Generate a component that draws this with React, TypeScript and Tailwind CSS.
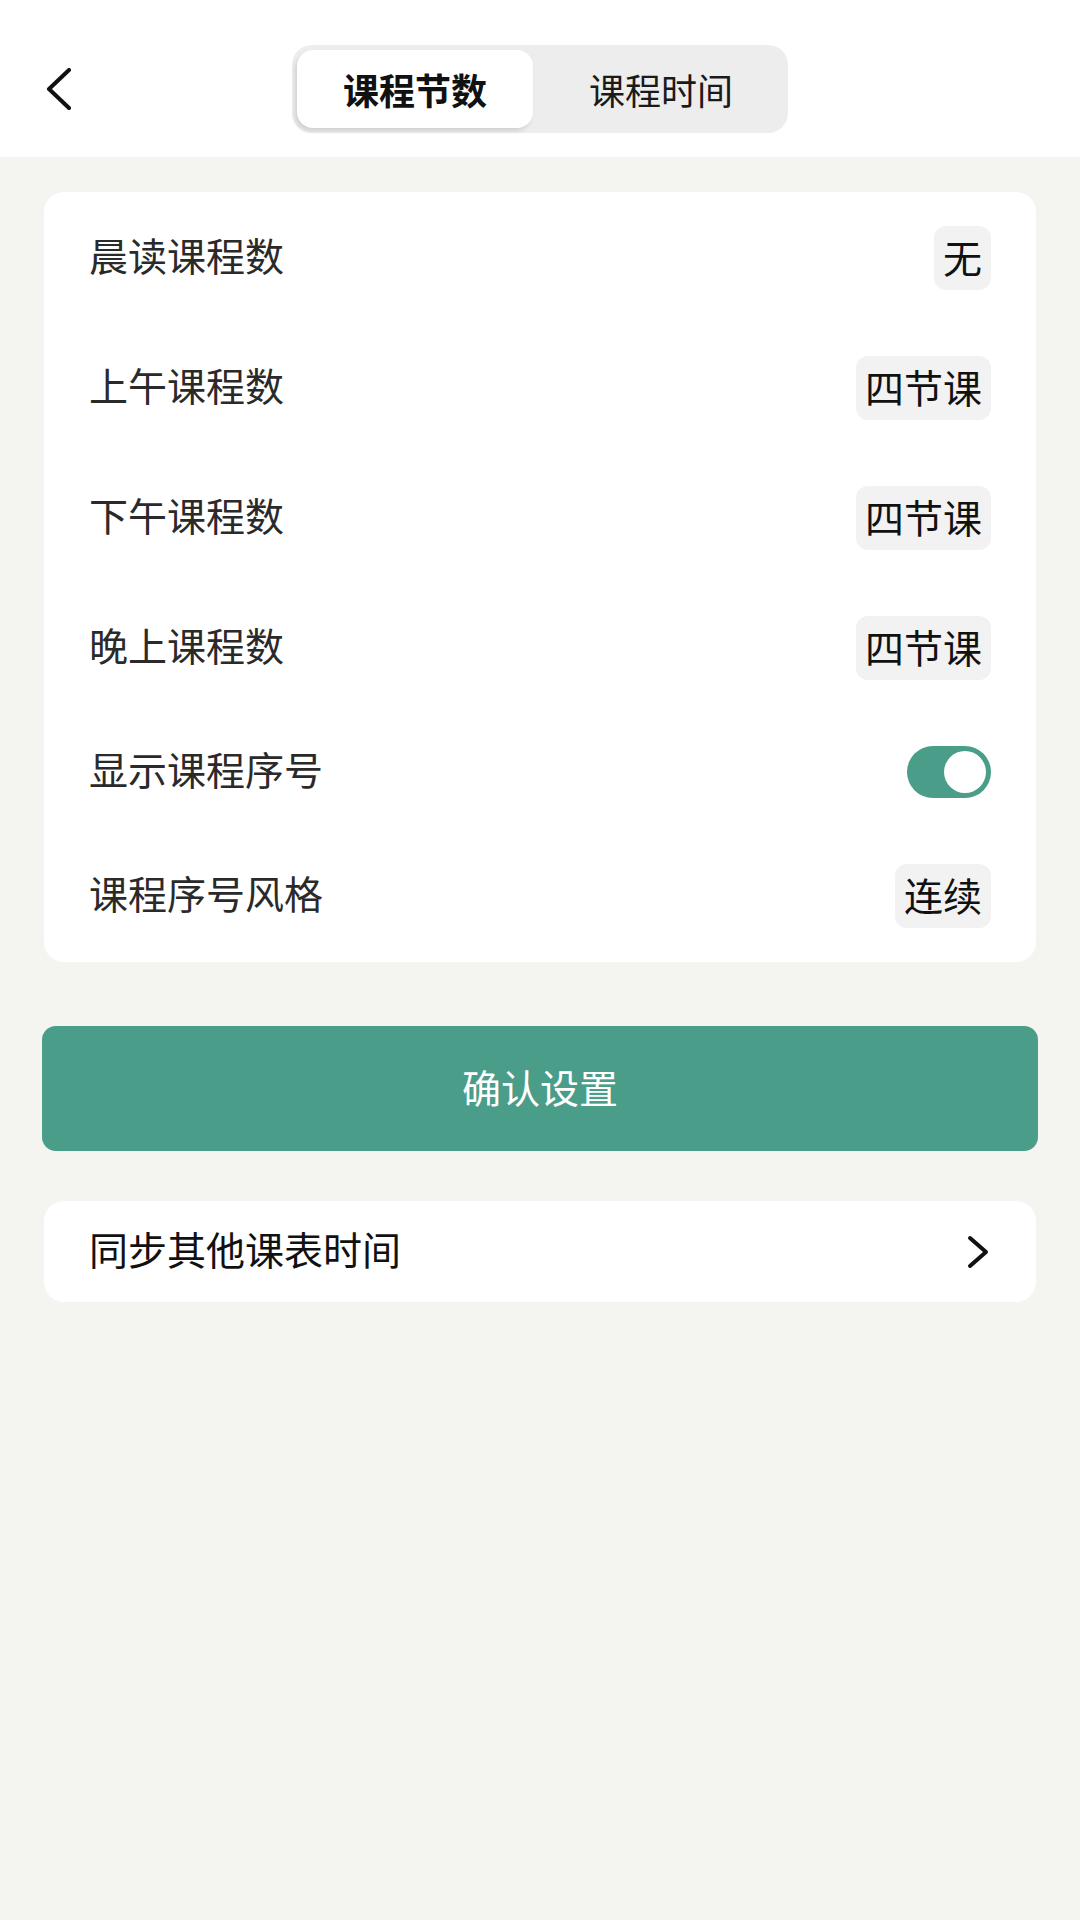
import React, { useState } from 'react';

const FONT = { fontFamily: '"Noto Sans CJK SC", "Noto Sans", sans-serif' };

interface Row {
  label: string;
  value?: string;
  toggle?: boolean;
}

const rows: Row[] = [
  { label: '晨读课程数', value: '无' },
  { label: '上午课程数', value: '四节课' },
  { label: '下午课程数', value: '四节课' },
  { label: '晚上课程数', value: '四节课' },
  { label: '显示课程序号', toggle: true },
  { label: '课程序号风格', value: '连续' },
];

function BackIcon() {
  return (
    <svg width="26" height="42" viewBox="0 0 26 42" fill="none">
      <polyline points="23,2 3,21 23,40" stroke="#111" strokeWidth="4" strokeLinecap="round" strokeLinejoin="round" />
    </svg>
  );
}

function ChevronRight() {
  return (
    <svg width="22" height="34" viewBox="0 0 22 34" fill="none">
      <polyline points="3,3 19,17 3,31" stroke="#111" strokeWidth="4" strokeLinecap="round" strokeLinejoin="round" />
    </svg>
  );
}

export default function App() {
  const [tab, setTab] = useState(0);
  const [showNo, setShowNo] = useState(true);

  return (
    <div className="min-h-[1920px] w-full bg-[#f4f4f0]" style={FONT}>
      {/* top bar */}
      <div className="h-[157px] bg-white grid grid-cols-[1fr_auto_1fr] items-start pt-[45px]">
        <div className="h-[88px] flex items-center pl-[46px]">
          <BackIcon />
        </div>
        <div className="w-[496px] h-[88px] rounded-[20px] bg-[#ededed] p-[5px] flex">
          {['课程节数', '课程时间'].map((t, i) => (
            <button
              key={t}
              type="button"
              onClick={() => setTab(i)}
              className={
                i === tab
                  ? 'w-[236px] h-full rounded-[16px] bg-white shadow-[-2px_3px_4px_rgba(0,0,0,0.12)] text-[36px] font-bold text-[#111] flex items-center justify-center'
                  : 'flex-1 h-full pl-[6px] rounded-[16px] text-[36px] text-[#1a1a1a] flex items-center justify-center'
              }
            >
              {t}
            </button>
          ))}
        </div>
        <div />
      </div>

      <div className="px-[44px] pt-[35px]">
        {/* settings card */}
        <div className="bg-white rounded-[20px] px-[45px] py-[1px]">
          {rows.map(r => (
            <div
              key={r.label}
              className={'flex items-center justify-between ' + (r.toggle ? 'h-[118px]' : 'h-[130px]')}
            >
              <span className="text-[39px] text-[#2a2a2a] leading-none pb-[7px]">{r.label}</span>
              {r.toggle ? (
                <button
                  type="button"
                  onClick={() => setShowNo(!showNo)}
                  className={
                    'w-[84px] h-[52px] rounded-full p-[5px] flex items-center ' +
                    (showNo ? 'bg-[#4a9d88] justify-end' : 'bg-[#e2e2e2] justify-start')
                  }
                >
                  <span className="w-[42px] h-[42px] rounded-full bg-white block" />
                </button>
              ) : (
                <span className="h-[64px] px-[9px] pb-[4px] rounded-[12px] bg-[#f2f2f2] text-[39px] text-[#111] flex items-center leading-none">
                  {r.value}
                </span>
              )}
            </div>
          ))}
        </div>

        {/* confirm */}
        <button
          type="button"
          className="mt-[64px] -mx-[2px] w-[calc(100%+4px)] h-[125px] pb-[5px] rounded-[14px] bg-[#4a9d88] text-[39px] text-white flex items-center justify-center"
        >
          确认设置
        </button>

        {/* sync */}
        <div className="mt-[50px] h-[101px] bg-white rounded-[20px] pl-[45px] pr-[47px] flex items-center justify-between">
          <span className="text-[39px] text-[#111] leading-none pb-[7px]">同步其他课表时间</span>
          <ChevronRight />
        </div>
      </div>
    </div>
  );
}
